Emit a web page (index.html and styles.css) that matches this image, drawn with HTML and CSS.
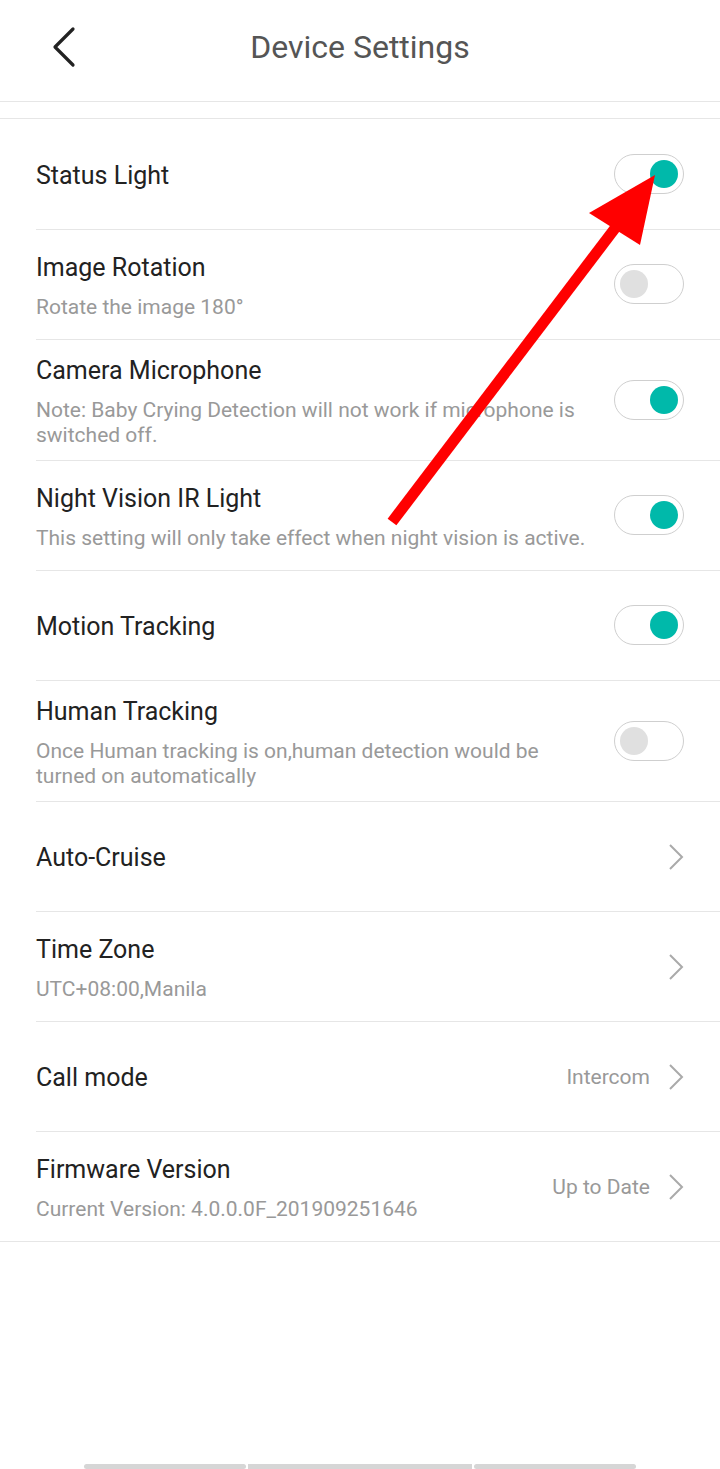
FILE: index.html
```html
<!DOCTYPE html>
<html lang="en">

<head>
    <meta charset="UTF-8">
    <meta name="viewport" content="width=device-width, initial-scale=1.0">
    <title>Device Settings</title>
    <link rel="stylesheet" href="styles.css">
</head>

<body>
    <div class="page">
        <header class="topbar">
            <button class="back" aria-label="Back">
                <svg width="30" height="44" viewBox="0 0 30 44">
                    <polyline points="21,4 3,22 21,40" fill="none" stroke="#222" stroke-width="3.2" stroke-linecap="round" stroke-linejoin="round" />
                </svg>
            </button>
            <h1 class="title">Device Settings</h1>
        </header>

        <ul class="settings">
            <li class="row">
                <div class="text">
                    <div class="label">Status Light</div>
                </div>
                <div class="switch on"><span class="knob"></span></div>
            </li>
            <li class="row">
                <div class="text">
                    <div class="label">Image Rotation</div>
                    <div class="desc">Rotate the image 180°</div>
                </div>
                <div class="switch"><span class="knob"></span></div>
            </li>
            <li class="row">
                <div class="text">
                    <div class="label">Camera Microphone</div>
                    <div class="desc">Note: Baby Crying Detection will not work if microphone is switched off.</div>
                </div>
                <div class="switch on"><span class="knob"></span></div>
            </li>
            <li class="row">
                <div class="text">
                    <div class="label">Night Vision IR Light</div>
                    <div class="desc">This setting will only take effect when night vision is active.</div>
                </div>
                <div class="switch on"><span class="knob"></span></div>
            </li>
            <li class="row">
                <div class="text">
                    <div class="label">Motion Tracking</div>
                </div>
                <div class="switch on"><span class="knob"></span></div>
            </li>
            <li class="row">
                <div class="text">
                    <div class="label">Human Tracking</div>
                    <div class="desc">Once Human tracking is on,human detection would be turned on automatically</div>
                </div>
                <div class="switch"><span class="knob"></span></div>
            </li>
            <li class="row">
                <div class="text">
                    <div class="label">Auto-Cruise</div>
                </div>
                <div class="more">
                    <svg class="chev" width="16" height="28" viewBox="0 0 16 28">
                        <polyline points="2,2 14,14 2,26" fill="none" stroke="#aaa" stroke-width="2" />
                    </svg>
                </div>
            </li>
            <li class="row">
                <div class="text">
                    <div class="label">Time Zone</div>
                    <div class="desc">UTC+08:00,Manila</div>
                </div>
                <div class="more">
                    <svg class="chev" width="16" height="28" viewBox="0 0 16 28">
                        <polyline points="2,2 14,14 2,26" fill="none" stroke="#aaa" stroke-width="2" />
                    </svg>
                </div>
            </li>
            <li class="row">
                <div class="text">
                    <div class="label">Call mode</div>
                </div>
                <div class="more">
                    <span class="value">Intercom</span>
                    <svg class="chev" width="16" height="28" viewBox="0 0 16 28">
                        <polyline points="2,2 14,14 2,26" fill="none" stroke="#aaa" stroke-width="2" />
                    </svg>
                </div>
            </li>
            <li class="row">
                <div class="text">
                    <div class="label">Firmware Version</div>
                    <div class="desc">Current Version: 4.0.0.0F_201909251646</div>
                </div>
                <div class="more">
                    <span class="value">Up to Date</span>
                    <svg class="chev" width="16" height="28" viewBox="0 0 16 28">
                        <polyline points="2,2 14,14 2,26" fill="none" stroke="#aaa" stroke-width="2" />
                    </svg>
                </div>
            </li>
        </ul>

        <div class="navbar">
            <span></span>
            <span class="mid"></span>
            <span></span>
        </div>

        <!-- annotation arrow drawn over the screenshot -->
        <svg class="arrow" width="720" height="1469" viewBox="0 0 720 1469">
            <line x1="392" y1="522" x2="616" y2="227" stroke="#ff0000" stroke-width="11" />
            <polygon points="655,175 589,213 640,245" fill="#ff0000" />
        </svg>
    </div>
</body>

</html>
```

FILE: styles.css
```css
body {
    margin: 0;
    background: #ffffff;
    font-family: Roboto, "Noto Sans", Arial, sans-serif;
    color: #222;
}

.page {
    position: relative;
    width: 720px;
    min-height: 1469px;
    display: flex;
    flex-direction: column;
}

.topbar {
    height: 102px;
    box-sizing: border-box;
    border-bottom: 1px solid #e6e6e6;
    display: flex;
    align-items: center;
    justify-content: center;
    position: relative;
}

.back {
    position: absolute;
    left: 52px;
    top: 25px;
    padding: 0;
    border: none;
    background: none;
}

.title {
    margin: 0;
    margin-top: -8px;
    font-size: 32px;
    font-weight: normal;
    color: #555;
}

.settings {
    list-style: none;
    margin: 16px 0 0;
    padding: 0 0 0 36px;
    border-top: 1px solid #e6e6e6;
    border-bottom: 1px solid #e6e6e6;
}

.row {
    min-height: 110px;
    box-sizing: border-box;
    padding: 15px 36px 12px 0;
    border-bottom: 1px solid #e6e6e6;
    display: flex;
    align-items: center;
    justify-content: space-between;
}

.row:first-child {
    min-height: 111px;
}

.row:last-child {
    min-height: 109px;
    border-bottom: none;
}

.text {
    flex: 1;
    max-width: 562px;
    display: flex;
    flex-direction: column;
    gap: 11px;
}

.label {
    font-size: 25px;
    line-height: 32px;
    color: #222;
}

.desc {
    font-size: 21px;
    line-height: 25px;
    color: #999;
}

.switch {
    width: 70px;
    height: 40px;
    box-sizing: border-box;
    border: 1px solid #cfcfcf;
    border-radius: 20px;
    display: flex;
    align-items: center;
    padding: 0 5px;
    margin-bottom: 4px;
    flex-shrink: 0;
}

.knob {
    width: 28px;
    height: 28px;
    border-radius: 50%;
    background: #e0e0e0;
}

.switch.on {
    justify-content: flex-end;
}

.switch.on .knob {
    background: #00b9aa;
}

.more {
    display: flex;
    align-items: center;
    gap: 18px;
    margin-bottom: 3px;
}

.value {
    font-size: 21px;
    color: #999;
}

.chev {
    display: block;
}

.navbar {
    margin-top: auto;
    padding: 0 84px 0 84px;
    display: flex;
    gap: 2px;
    height: 5px;
}

.navbar span {
    flex: 162;
    background: #d6d6d6;
    border-radius: 3px;
}

.navbar .mid {
    flex: 224;
    border-radius: 0;
}

.arrow {
    position: absolute;
    left: 0;
    top: 0;
    pointer-events: none;
}
```
